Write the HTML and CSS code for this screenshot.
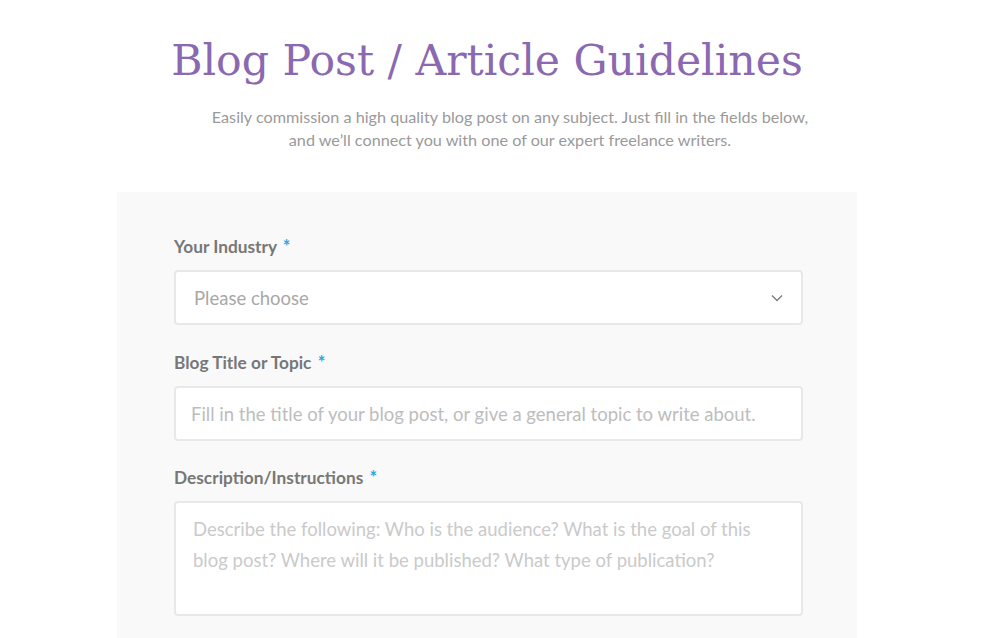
FILE: index.html
```html
<!DOCTYPE html>
<html lang="en">

<head>
    <meta charset="UTF-8">
    <meta name="viewport" content="width=device-width, initial-scale=1.0">
    <title>Blog Post / Article Guidelines</title>
    <link rel="stylesheet" href="styles.css">
</head>

<body>
    <div class="page">
        <h1>Blog Post / Article Guidelines</h1>
        <p class="intro">Easily commission a high quality blog post on any subject. Just fill in the fields below,<br>
            and we’ll connect you with one of our expert freelance writers.</p>

        <form class="panel">
            <div class="field">
                <label for="industry">Your Industry <span class="req">*</span></label>
                <div class="select">
                    <span class="placeholder">Please choose</span>
                    <svg class="chevron" width="12" height="8" viewBox="0 0 12 8">
                        <path d="M1 1.5 L6 6.5 L11 1.5" fill="none" stroke="#7a7a7a" stroke-width="1.3"/>
                    </svg>
                </div>
            </div>

            <div class="field">
                <label for="title">Blog Title or Topic <span class="req">*</span></label>
                <input type="text" id="title" placeholder="Fill in the title of your blog post, or give a general topic to write about.">
            </div>

            <div class="field">
                <label for="desc">Description/Instructions <span class="req">*</span></label>
                <textarea id="desc" placeholder="Describe the following: Who is the audience? What is the goal of this blog post? Where will it be published? What type of publication?"></textarea>
            </div>
        </form>
    </div>
</body>

</html>
```

FILE: styles.css
```css
body {
    margin: 0;
    padding: 0;
    background-color: #fff;
    font-family: Lato, 'Open Sans', sans-serif;
    color: #777;
    overflow: hidden;
}

.page {
    width: 740px;
    margin-left: 117px;
}

h1 {
    margin: 31px 0 0;
    font-family: 'DejaVu Serif', serif;
    font-weight: normal;
    font-size: 42.6px;
    line-height: 58px;
    color: #8a69b1;
    text-align: center;
}

.intro {
    margin: 16px 0 0;
    padding-left: 46px;
    font-size: 16.2px;
    line-height: 23px;
    color: #9a9a9a;
    text-align: center;
}

.panel {
    margin-top: 41px;
    padding: 44px 54px 40px 57px;
    background-color: #f9f9f9;
    min-height: 500px;
}

.field {
    margin-bottom: 27px;
}

.field:nth-child(2) {
    margin-bottom: 26px;
}

.field label {
    display: block;
    margin-bottom: 12px;
    font-size: 17.3px;
    font-weight: bold;
    color: #777;
    line-height: 22px;
}

.req {
    margin-left: 2px;
    color: #2aa8e0;
    font-size: 18px;
    line-height: 0;
}

.select,
.field input,
.field textarea {
    box-sizing: border-box;
    width: 100%;
    background-color: #fff;
    border: 2px solid #e8e8e8;
    border-radius: 4px;
    font-family: Lato, 'Open Sans', sans-serif;
    font-size: 18.5px;
}

.select {
    display: flex;
    align-items: center;
    justify-content: space-between;
    height: 55px;
    padding: 0 18px 0 18px;
}

.placeholder {
    color: #a8a8a8;
}

.field input {
    display: block;
    height: 55px;
    padding: 0 15px;
    outline: none;
}

.field input::placeholder {
    color: #bdbdbd;
}

.field textarea {
    display: block;
    height: 115px;
    padding: 11px 17px;
    line-height: 31px;
    resize: none;
    outline: none;
}

.field textarea::placeholder {
    color: #cacaca;
}
```
